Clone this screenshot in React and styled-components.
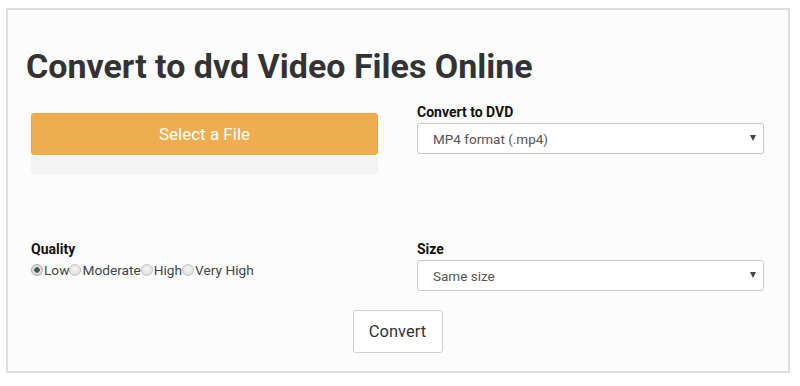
import React from "react";
import styled, { createGlobalStyle } from "styled-components";

const Global = createGlobalStyle`
  html, body { margin: 0; padding: 0; background: #ffffff; }
  body { font-family: Roboto, "Liberation Sans", Arial, sans-serif; color: #333; }
  * { box-sizing: border-box; }
`;

const Page = styled.div`
  padding: 8px 10px 0 6px;
`;

const Card = styled.div`
  width: 784px;
  height: 365px;
  border: 2px solid #dedede;
  background: #fcfcfc;
  padding: 0 24px 0 23px;
  display: flex;
  flex-direction: column;
`;

const Title = styled.h1`
  margin: 36px 0 0 -5px;
  font-size: 34px;
  line-height: 40px;
  font-weight: 700;
  color: #333;
  letter-spacing: 0;
`;

const Grid = styled.div`
  display: grid;
  grid-template-columns: 347px 347px;
  column-gap: 39px;
  row-gap: 0;
`;

const Col = styled.div`
  display: flex;
  flex-direction: column;
  height: ${(p) => p.$h}px;
`;

const UploadButton = styled.button`
  height: 42px;
  width: 100%;
  border: 1px solid #e8a747;
  border-radius: 3px;
  background: #eeae4f;
  color: #fff;
  font-family: Roboto, "Liberation Sans", sans-serif;
  font-size: 17px;
  margin-top: ${(p) => p.$top}px;
  padding: 0;
`;

const Progress = styled.div`
  height: 18px;
  width: 100%;
  background: #f3f3f3;
  border-radius: 0 0 3px 3px;
  margin-top: 1px;
`;

const Label = styled.div`
  font-size: 14px;
  font-weight: 700;
  color: #111;
  line-height: 16px;
  margin-top: ${(p) => p.$top || 0}px;
`;

const SelectWrap = styled.div`
  position: relative;
  margin-top: ${(p) => p.$top}px;
`;

const Select = styled.select`
  appearance: none;
  -webkit-appearance: none;
  width: 100%;
  height: 31px;
  border: 1px solid #c8c8c8;
  border-radius: 3px;
  background: #fff;
  color: #555;
  font-family: Roboto, "Liberation Sans", sans-serif;
  font-size: 13.5px;
  padding: 0 0 0 15px;
  outline: none;
`;

const Arrow = styled.span`
  position: absolute;
  right: 8px;
  top: 12px;
  width: 0;
  height: 0;
  border-left: 3px solid transparent;
  border-right: 3px solid transparent;
  border-top: 6px solid #444;
  pointer-events: none;
`;

const RadioRow = styled.div`
  display: flex;
  align-items: center;
  margin-top: 5px;
  font-size: 13.7px;
  color: #444;
`;

const RadioLabel = styled.label`
  display: flex;
  align-items: center;
`;

const Radio = styled.input`
  appearance: none;
  -webkit-appearance: none;
  width: 12px;
  height: 12px;
  margin: 0 1px 0 0;
  border-radius: 50%;
  border: 1px solid #c4c4c4;
  background: radial-gradient(circle at 50% 40%, #f4f4f4, #d8d8d8);
  position: relative;
  &:checked {
    background: radial-gradient(circle, #555 0 2.5px, #e0e0e0 3px, #d2d2d2 100%);
    border-color: #aaa;
  }
`;

const ConvertRow = styled.div`
  display: flex;
  justify-content: center;
  margin-top: 6px;
`;

const ConvertButton = styled.button`
  width: 90px;
  height: 43px;
  background: #fff;
  border: 1px solid #cfcfcf;
  border-radius: 3px;
  color: #333;
  font-family: Roboto, "Liberation Sans", sans-serif;
  font-size: 16.5px;
  padding: 0;
`;

export default function App() {
  return (
    <Page>
      <Global />
      <Card>
        <Title>Convert to dvd Video Files Online</Title>
        <Grid>
          <Col $h={149}>
            <UploadButton $top={27}>Select a File</UploadButton>
            <Progress />
          </Col>
          <Col $h={149}>
            <Label $top={18}>Convert to DVD</Label>
            <SelectWrap $top={3}>
              <Select defaultValue="mp4">
                <option value="mp4">MP4 format (.mp4)</option>
              </Select>
              <Arrow />
            </SelectWrap>
          </Col>
          <Col $h={69}>
            <Label $top={6}>Quality</Label>
            <RadioRow>
              <RadioLabel><Radio type="radio" name="q" defaultChecked />Low</RadioLabel>
              <RadioLabel><Radio type="radio" name="q" />Moderate</RadioLabel>
              <RadioLabel><Radio type="radio" name="q" />High</RadioLabel>
              <RadioLabel><Radio type="radio" name="q" />Very High</RadioLabel>
            </RadioRow>
          </Col>
          <Col $h={69}>
            <Label $top={6}>Size</Label>
            <SelectWrap $top={3}>
              <Select defaultValue="same">
                <option value="same">Same size</option>
              </Select>
              <Arrow />
            </SelectWrap>
          </Col>
        </Grid>
        <ConvertRow>
          <ConvertButton>Convert</ConvertButton>
        </ConvertRow>
      </Card>
    </Page>
  );
}
